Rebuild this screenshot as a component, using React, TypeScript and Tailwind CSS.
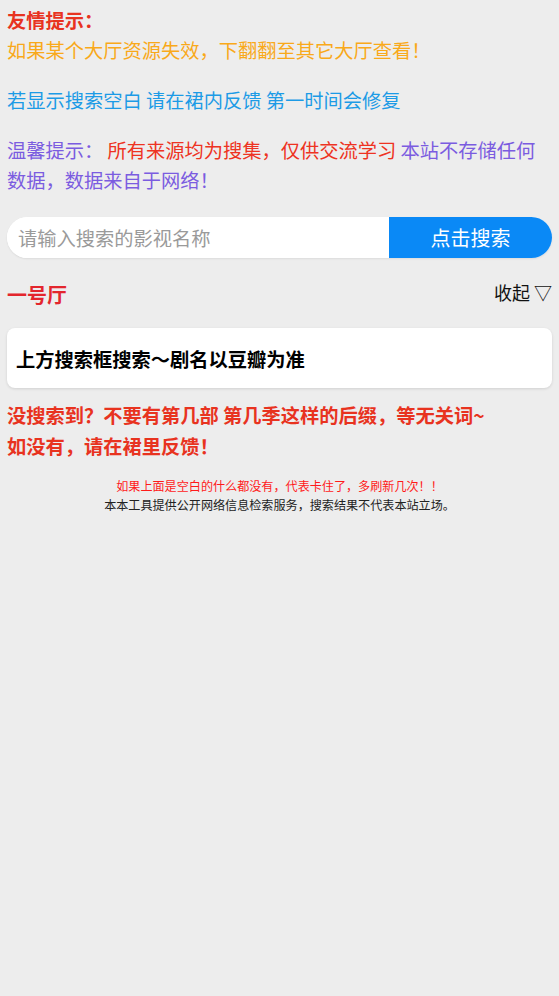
export default function App() {
  return (
    <div
      className="min-h-[996px] w-full bg-[#ededed] px-[7px] pt-[5px] text-[19.25px] leading-[30px]"
      style={{ fontFamily: '"Noto Sans CJK SC", "Noto Sans", sans-serif' }}
    >
      {/* tips */}
      <p className="font-bold text-[#e8331f]">友情提示：</p>
      <p className="text-[#f9a91a]">如果某个大厅资源失效，下翻翻至其它大厅查看！</p>
      <p className="mt-[20px] text-[#1c9be6]">若显示搜索空白 请在裙内反馈 第一时间会修复</p>
      <p className="mt-[20px] text-[#7b5ce0]">
        温馨提示： <span className="text-[#ee3322]">所有来源均为搜集，仅供交流学习</span> 本站不存储任何数据，数据来自于网络！
      </p>

      {/* search */}
      <div className="mt-[22px] flex h-[41px] overflow-hidden rounded-full bg-white shadow-[0_1px_2px_rgba(0,0,0,0.08)]">
        <input
          className="min-w-0 flex-1 bg-white pl-[11px] text-[19.25px] text-[#333] outline-none placeholder:text-[#9a9a9a]"
          placeholder="请输入搜索的影视名称"
        />
        <button className="w-[163px] bg-[#0a89f6] text-[20px] text-white">点击搜索</button>
      </div>

      {/* hall header */}
      <div className="mt-[22px] flex items-center justify-between">
        <h2 className="text-[20px] font-bold text-[#e3262d]">一号厅</h2>
        <span className="-mt-[6px] text-[18px] text-[#111]">收起 ▽</span>
      </div>

      {/* card */}
      <div className="mt-[18px] flex h-[60px] items-center rounded-[8px] bg-white px-[9px] shadow-[0_1px_3px_rgba(0,0,0,0.12)]">
        <span className="pt-[2px] text-[19.25px] font-bold text-black">上方搜索框搜索～剧名以豆瓣为准</span>
      </div>

      <p className="mt-[12px] text-[19.25px] font-bold leading-[31px] text-[#e8331f]">
        没搜索到？不要有第几部 第几季这样的后缀，等无关词~
        <br />
        如没有，请在裙里反馈！
      </p>

      <div className="mt-[14px] text-center text-[12.1px] leading-[19px]">
        <p className="text-[#ff1a1a]">如果上面是空白的什么都没有，代表卡住了，多刷新几次！！</p>
        <p className="text-[#222]">本本工具提供公开网络信息检索服务，搜索结果不代表本站立场。</p>
      </div>
    </div>
  )
}
